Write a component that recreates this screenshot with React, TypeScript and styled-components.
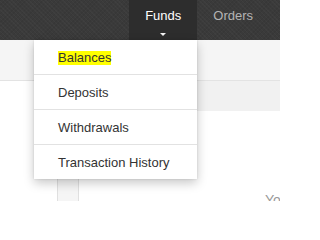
import React from "react";
import styled, { createGlobalStyle } from "styled-components";

const Global = createGlobalStyle`
  html, body { margin: 0; padding: 0; background: #fff; overflow: hidden; }
  body { font-family: "Liberation Sans", Arial, sans-serif; font-size: 13px; }
  * { box-sizing: border-box; }
`;

const Page = styled.div`
  position: relative;
  width: 280px;
  height: 201px;
  overflow: hidden;
  display: flex;
  flex-direction: column;
`;

const NavBar = styled.nav`
  height: 40px;
  flex: none;
  display: flex;
  justify-content: flex-end;
  padding-right: 11px;
  background-color: #3a3a3a;
  background-image: repeating-linear-gradient(45deg, rgba(255,255,255,0.025) 0 1px, transparent 1px 3px),
    repeating-linear-gradient(-45deg, rgba(0,0,0,0.06) 0 1px, transparent 1px 3px);
`;

const NavItem = styled.div<{ $active?: boolean }>`
  position: relative;
  padding: 8px 16px 0;
  line-height: 15px;
  font-size: 13px;
  color: ${(p) => (p.$active ? "#ffffff" : "#b4b4b4")};
  background: ${(p) => (p.$active ? "#2d2d2d" : "transparent")};
`;

const Caret = styled.span`
  position: absolute;
  left: 31px;
  top: 33px;
  width: 0;
  height: 0;
  border-left: 3px solid transparent;
  border-right: 3px solid transparent;
  border-top: 3px solid #f4f4f4;
`;

const SubBar = styled.div`
  height: 41px;
  flex: none;
  background: #f5f5f5;
  border-bottom: 1px solid #e3e3e3;
`;

const Content = styled.div`
  flex: 1;
  display: flex;
  flex-direction: column;
`;

const Strip = styled.div`
  height: 30px;
  margin-left: 100px;
  background: #f1f1f1;
  flex: none;
`;

const Body = styled.div`
  flex: 1;
  display: flex;
  padding-left: 57px;
  position: relative;
`;

const Column = styled.div`
  width: 22px;
  background: #f5f5f5;
  border-left: 1px solid #e0e0e0;
  border-right: 1px solid #e0e0e0;
`;

const Hint = styled.span`
  position: absolute;
  left: 265px;
  top: 81px;
  color: #9a9a9a;
  font-size: 14px;
  line-height: 16px;
`;

const Menu = styled.ul`
  position: absolute;
  left: 34px;
  top: 40px;
  width: 163px;
  margin: 0;
  padding: 0;
  list-style: none;
  background: #fff;
  box-shadow: 0 4px 10px rgba(0, 0, 0, 0.22), 0 0 2px rgba(0, 0, 0, 0.12);
  z-index: 10;
`;

const MenuItem = styled.li`
  height: 35px;
  display: flex;
  align-items: center;
  padding-left: 24px;
  color: #333;
  font-size: 13px;
  border-top: 1px solid #e2e2e2;
  &:first-child {
    border-top: none;
    height: 34px;
    padding-top: 1px;
  }
`;

const Mark = styled.mark`
  background: #ffff00;
  color: #333;
  line-height: 14px;
  padding: 0;
`;

export default function App() {
  return (
    <>
      <Global />
      <Page>
        <NavBar>
          <NavItem $active>
            Funds
            <Caret />
          </NavItem>
          <NavItem>Orders</NavItem>
        </NavBar>
        <SubBar />
        <Content>
          <Strip />
          <Body>
            <Column />
            <Hint>Yo</Hint>
          </Body>
        </Content>
        <Menu>
          <MenuItem>
            <Mark>Balances</Mark>
          </MenuItem>
          <MenuItem>Deposits</MenuItem>
          <MenuItem>Withdrawals</MenuItem>
          <MenuItem>Transaction History</MenuItem>
        </Menu>
      </Page>
    </>
  );
}
